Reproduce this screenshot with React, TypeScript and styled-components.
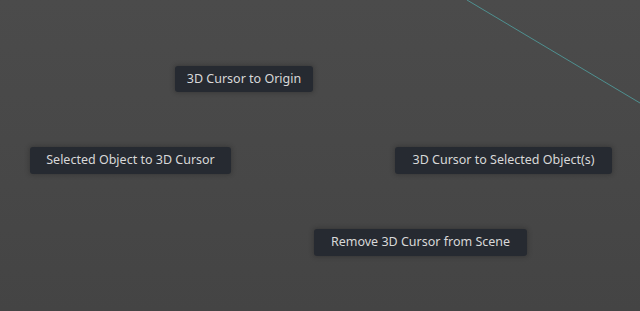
import React from 'react';
import styled, { createGlobalStyle } from 'styled-components';

const GlobalStyle = createGlobalStyle`
    html, body {
        margin: 0;
        padding: 0;
        background: #484848;
    }
`;

const Viewport = styled.main`
    position: relative;
    width: 640px;
    height: 311px;
    overflow: hidden;
    background: linear-gradient(180deg, #4b4b4b 0%, #474747 60%, #444444 100%);
    font-family: "Noto Sans", "DejaVu Sans", sans-serif;
`;

const AxisLine = styled.svg`
    position: absolute;
    top: 0;
    left: 0;
    width: 640px;
    height: 311px;
    pointer-events: none;
`;

const Pie = styled.nav`
    position: relative;
    display: flex;
    flex-direction: column;
    padding-top: 66px;
    gap: 55px;
`;

type RowProps = {
    $start?: number;
    $spread?: boolean;
};

const PieRow = styled.div<RowProps>`
    display: flex;
    justify-content: ${p => (p.$spread ? 'space-between' : 'flex-start')};
    padding-left: ${p => p.$start ?? 30}px;
    padding-right: ${p => (p.$spread ? 28 : 0)}px;
`;

const PieButton = styled.button<{ $width: number; $height?: number }>`
    width: ${p => p.$width}px;
    height: ${p => p.$height ?? 27}px;
    padding: 0;
    border: none;
    border-radius: 3px;
    background: #262a31;
    color: #d8d8d8;
    font-family: inherit;
    font-size: 12.5px;
    line-height: 1;
    box-shadow: 0 0 4px 1px rgba(30, 30, 30, 0.35);
    cursor: pointer;
`;

function App() {
    return (
        <>
            <GlobalStyle />
            <Viewport>
                <AxisLine viewBox="0 0 640 311">
                    <line x1="467" y1="0" x2="640" y2="103" stroke="#4f9090" strokeWidth="1" />
                </AxisLine>
                <Pie>
                    <PieRow $start={175}>
                        <PieButton $width={138} $height={26}>3D Cursor to Origin</PieButton>
                    </PieRow>
                    <PieRow $spread $start={30}>
                        <PieButton $width={201}>Selected Object to 3D Cursor</PieButton>
                        <PieButton $width={217}>3D Cursor to Selected Object(s)</PieButton>
                    </PieRow>
                    <PieRow $start={314}>
                        <PieButton $width={213}>Remove 3D Cursor from Scene</PieButton>
                    </PieRow>
                </Pie>
            </Viewport>
        </>
    );
}

export default App;
